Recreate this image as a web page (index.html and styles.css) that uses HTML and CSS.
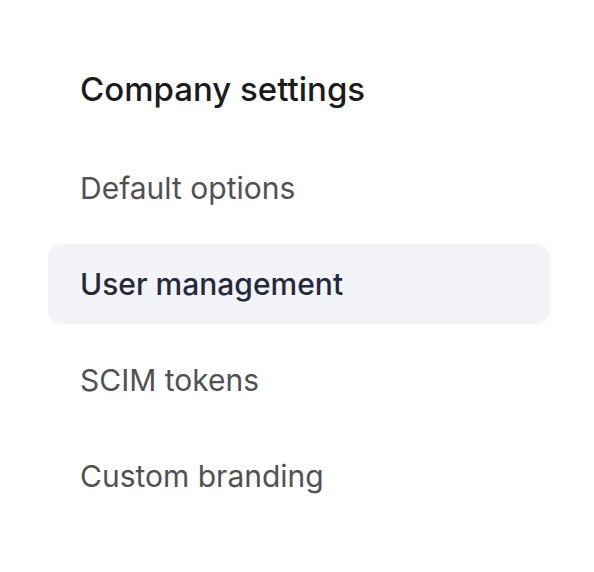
FILE: index.html
```html
<!DOCTYPE html>
<html>
<head>
<meta charset="utf-8">
<link rel="stylesheet" href="styles.css">
</head>
<body>
<nav class="settings-nav">
  <h2 class="nav-title">Company settings</h2>
  <ul class="nav-list">
    <li class="nav-item">Default options</li>
    <li class="nav-item active">User management</li>
    <li class="nav-item">SCIM tokens</li>
    <li class="nav-item">Custom branding</li>
  </ul>
</nav>
</body>
</html>
```
FILE: styles.css
```css
html, body {
  margin: 0;
  padding: 0;
  background: #ffffff;
}
body {
  font-family: Inter, "Noto Sans", sans-serif;
}
.settings-nav {
  width: 502px;
  padding: 49px 0 0 48px;
  display: flex;
  flex-direction: column;
}
.nav-title {
  margin: 0 0 19px 0;
  height: 80px;
  display: flex;
  align-items: center;
  padding: 0 32px;
  font-size: 33px;
  font-weight: 500;
  color: #1c1c1e;
}
.nav-list {
  list-style: none;
  margin: 0;
  padding: 0;
  display: flex;
  flex-direction: column;
  gap: 16px;
}
.nav-item {
  height: 80px;
  display: flex;
  align-items: center;
  padding: 0 32px;
  border-radius: 14px;
  font-size: 30px;
  color: #515154;
}
.nav-item.active {
  background: #f3f4f8;
  color: #28283d;
  font-weight: 500;
}
```
